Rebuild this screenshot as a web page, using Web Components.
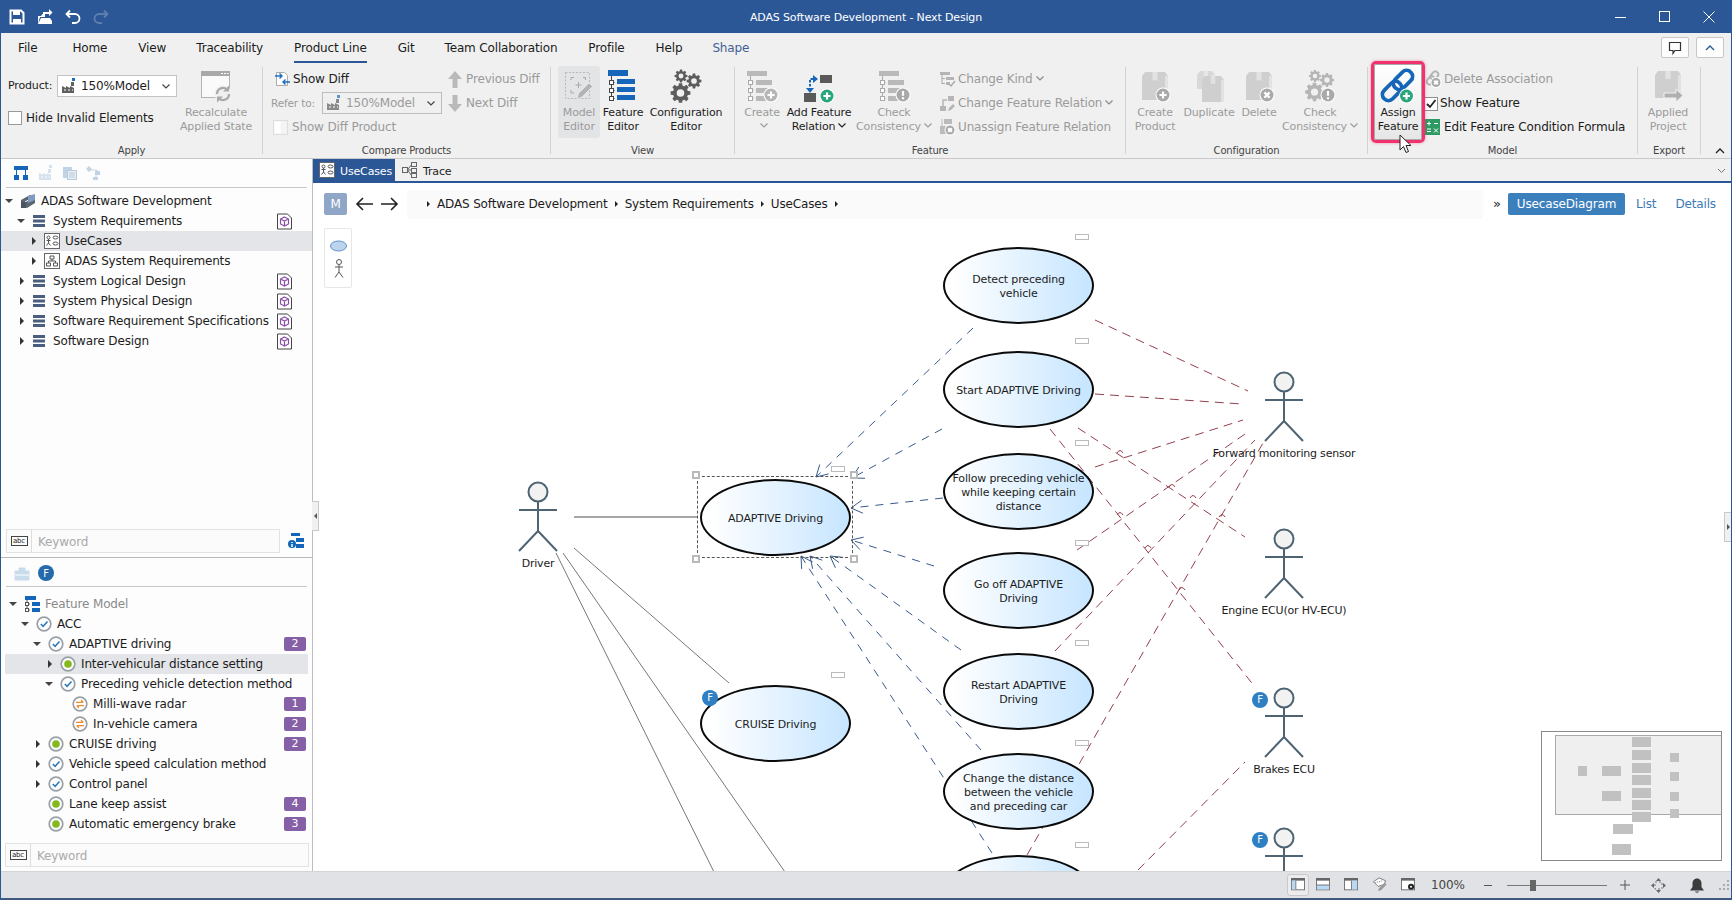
<!DOCTYPE html>
<html lang="en"><head><meta charset="utf-8"><title>ADAS Software Development - Next Design</title>
<style>
html,body{margin:0;padding:0;width:1732px;height:900px;overflow:hidden;background:#fff}
body{font:12px/14px "DejaVu Sans","Noto Sans",sans-serif;letter-spacing:-.15px;color:#1c1c1c}
</style></head><body>
<nd-app>
  <nd-titlebar text="ADAS Software Development - Next Design"></nd-titlebar>
  <nd-menubar>
    <nd-menu-item style="margin-right:4px">File</nd-menu-item><nd-menu-item>Home</nd-menu-item><nd-menu-item style="margin-right:-1px">View</nd-menu-item><nd-menu-item>Traceability</nd-menu-item>
    <nd-menu-item active>Product Line</nd-menu-item><nd-menu-item style="margin-right:-1px">Git</nd-menu-item><nd-menu-item>Team Collaboration</nd-menu-item>
    <nd-menu-item>Profile</nd-menu-item><nd-menu-item style="margin-right:-1px">Help</nd-menu-item><nd-menu-item ctx>Shape</nd-menu-item>
  </nd-menubar>
  <nd-ribbon>
    <nd-group label="Apply" w="262" pad="6">
      <nd-stack w="173" style="padding-top:8px;gap:14px">
        <nd-hbox style="height:22px"><span style="width:49px;margin-left:1px;font-size:11px">Product:</span><nd-combo text="150%Model"></nd-combo></nd-hbox>
        <nd-hbox style="height:14px;gap:4px"><nd-check></nd-check><span>Hide Invalid Elements</span></nd-hbox>
      </nd-stack>
      <nd-big w="72" icon="recalc" label="Recalculate|Applied State" off></nd-big>
    </nd-group>
    <nd-group label="Compare Products" w="288" pad="8">
      <nd-stack w="176">
        <nd-small icon="showdiff" label="Show Diff" style="margin-left:3px"></nd-small>
        <nd-hbox style="height:24px;color:#9b9b9b"><span style="width:51px;font-size:10.500px">Refer to:</span><nd-combo text="150%Model" off></nd-combo></nd-hbox>
        <nd-small icon="toggle" label="Show Diff Product" off style="margin-left:2px"></nd-small>
      </nd-stack>
      <nd-stack>
        <nd-small icon="up" label="Previous Diff" off></nd-small>
        <nd-small icon="down" label="Next Diff" off></nd-small>
      </nd-stack>
    </nd-group>
    <nd-group label="View" w="184" pad="7">
      <nd-big w="42" icon="model" label="Model|Editor" off pressed></nd-big>
      <nd-big w="40" icon="feature" label="Feature|Editor" style="margin-left:3px"></nd-big>
      <nd-big w="76" icon="gears" label="Configuration|Editor" style="margin-left:5px"></nd-big>
    </nd-group>
    <nd-group label="Feature" w="391" pad="5">
      <nd-big w="44" icon="create" label="Create|" caret off></nd-big>
      <nd-big w="64" icon="addrel" label="Add Feature|Relation" caret style="margin-left:3px"></nd-big>
      <nd-big w="78" icon="check" label="Check|Consistency" caret off style="margin-left:4px"></nd-big>
      <nd-stack style="margin-left:6px">
        <nd-small icon="kind" label="Change Kind" caret off></nd-small>
        <nd-small icon="rel" label="Change Feature Relation" caret off></nd-small>
        <nd-small icon="unassign" label="Unassign Feature Relation" off></nd-small>
      </nd-stack>
    </nd-group>
    <nd-group label="Configuration" w="242" pad="6">
      <nd-big w="46" icon="boxplus" label="Create|Product" off></nd-big>
      <nd-big w="54" icon="boxes" label="Duplicate|" off style="margin-left:4px"></nd-big>
      <nd-big w="40" icon="boxx" label="Delete|" off style="margin-left:3px"></nd-big>
      <nd-big w="78" icon="gearsx" label="Check|Consistency" caret off style="margin-left:2px"></nd-big>
    </nd-group>
    <nd-group label="Model" w="270" pad="3">
      <nd-big w="54" icon="assign" label="Assign|Feature" hl></nd-big>
      <nd-stack>
        <nd-small icon="delassoc" label="Delete Association" off></nd-small>
        <nd-small icon="checked" label="Show Feature" tight></nd-small>
        <nd-small icon="formula" label="Edit Feature Condition Formula"></nd-small>
      </nd-stack>
    </nd-group>
    <nd-group label="Export" w="63" pad="2">
      <nd-big w="56" icon="boxarrow" label="Applied|Project" off></nd-big>
    </nd-group>
    <nd-ribbon-tools></nd-ribbon-tools>
  </nd-ribbon>
  <nd-workspace>
    <nd-sidebar>
      <nd-pane slot="top">
        <nd-toolstrip icons="hier,factory,docs,nodes" style="--tp:6px"></nd-toolstrip>
        <nd-tree style="height:341px">
          <nd-row l="0" a="d" i="root" text="ADAS Software Development"></nd-row>
          <nd-row l="1" a="d" i="pkg" text="System Requirements" doc></nd-row>
          <nd-row l="2" a="r" i="uc" text="UseCases" sel></nd-row>
          <nd-row l="2" a="r" i="st" text="ADAS System Requirements"></nd-row>
          <nd-row l="1" a="r" i="pkg" text="System Logical Design" doc></nd-row>
          <nd-row l="1" a="r" i="pkg" text="System Physical Design" doc></nd-row>
          <nd-row l="1" a="r" i="pkg" text="Software Requirement Specifications" doc></nd-row>
          <nd-row l="1" a="r" i="pkg" text="Software Design" doc></nd-row>
        </nd-tree>
        <nd-search info style="padding:0 8px 0 5px"></nd-search>
      </nd-pane>
      <nd-pane slot="bottom" style="height:313px">
        <nd-toolstrip icons="chest,f"></nd-toolstrip>
        <nd-tree style="padding:7px 4px 0;height:256px;box-sizing:border-box">
          <nd-row l="0" a="d" i="fm" text="Feature Model" dim></nd-row>
          <nd-row l="1" a="d" i="ok" text="ACC"></nd-row>
          <nd-row l="2" a="d" i="ok" text="ADAPTIVE driving" badge="2" narrow></nd-row>
          <nd-row l="3" a="r" i="dot" text="Inter-vehicular distance setting" sel narrow></nd-row>
          <nd-row l="3" a="d" i="ok" text="Preceding vehicle detection method" narrow></nd-row>
          <nd-row l="4" i="swap" text="Milli-wave radar" badge="1" narrow></nd-row>
          <nd-row l="4" i="swap" text="In-vehicle camera" badge="2" narrow></nd-row>
          <nd-row l="2" a="r" i="dot" text="CRUISE driving" badge="2" narrow></nd-row>
          <nd-row l="2" a="r" i="ok" text="Vehicle speed calculation method"></nd-row>
          <nd-row l="2" a="r" i="ok" text="Control panel"></nd-row>
          <nd-row l="2" i="dot" text="Lane keep assist" badge="4" narrow></nd-row>
          <nd-row l="2" i="dot" text="Automatic emergency brake" badge="3" narrow></nd-row>
        </nd-tree>
        <nd-search style="padding:0 3px 0 4px"></nd-search>
      </nd-pane>
    </nd-sidebar>
    <nd-document>
      <nd-tabs slot="tabs"></nd-tabs>
      <nd-navbar slot="nav"></nd-navbar>
      <nd-palette slot="nav"></nd-palette>
      <nd-diagram slot="canvas">
        <nd-usecase cx="775" cy="517" selected>ADAPTIVE Driving</nd-usecase>
        <nd-usecase cx="775" cy="723" f>CRUISE Driving</nd-usecase>
        <nd-usecase cx="1018" cy="285">Detect preceding<br>vehicle</nd-usecase>
        <nd-usecase cx="1018" cy="389">Start ADAPTIVE Driving</nd-usecase>
        <nd-usecase cx="1018" cy="491">Follow preceding vehicle<br>while keeping certain<br>distance</nd-usecase>
        <nd-usecase cx="1018" cy="590">Go off ADAPTIVE<br>Driving</nd-usecase>
        <nd-usecase cx="1018" cy="691">Restart ADAPTIVE<br>Driving</nd-usecase>
        <nd-usecase cx="1018" cy="791">Change the distance<br>between the vehicle<br>and preceding car</nd-usecase>
        <nd-usecase cx="1018" cy="893"></nd-usecase>
        <nd-actor cx="538" top="482" text="Driver"></nd-actor>
        <nd-actor cx="1284" top="372" text="Forward monitoring sensor"></nd-actor>
        <nd-actor cx="1284" top="529" text="Engine ECU(or HV-ECU)"></nd-actor>
        <nd-actor cx="1284" top="688" text="Brakes ECU" f></nd-actor>
        <nd-actor cx="1284" top="828" f></nd-actor>
      </nd-diagram>
      <nd-minimap slot="canvas"></nd-minimap>
    </nd-document>
  </nd-workspace>
  <nd-statusbar></nd-statusbar>
</nd-app>
<script>
const TXT='#1c1c1c',OFF='#9b9b9b';
function gear(cx,cy,r,n,fill){
  let d='';const ri=r*.76,ro=r;
  for(let i=0;i<n;i++){const a=i/n*Math.PI*2,w=Math.PI/n*.52;
    const p=[[ri,a-w*1.35],[ro,a-w*.8],[ro,a+w*.8],[ri,a+w*1.35]];
    p.forEach((q,j)=>{d+=(i===0&&j===0?'M':'L')+(cx+q[0]*Math.cos(q[1])).toFixed(2)+' '+(cy+q[0]*Math.sin(q[1])).toFixed(2)});}
  d+='Z';const h=r*.38;
  d+=`M${cx+h} ${cy}a${h} ${h} 0 1 0 ${-2*h} 0a${h} ${h} 0 1 0 ${2*h} 0Z`;
  return `<path fill="${fill}" fill-rule="evenodd" d="${d}"/>`;
}
const treeI=(c,c2,ln)=>`<path fill="${c}" d="M1 1h20v5H1z"/><path fill="${c2}" d="M10 10h16v5H10zM10 18h14v5H10zM10 26h12v5H10z"/><path fill="none" stroke="${ln}" d="M4.500 6v23M4.500 12.500h3M4.500 20.500h3M4.500 28.500h3"/><g fill="#fff" stroke="${ln}"><rect x="2.500" y="10.500" width="4" height="4"/><rect x="2.500" y="18.500" width="4" height="4"/><rect x="2.500" y="26.500" width="4" height="4"/></g>`;
const badge=(cx,cy,r,fill,sym)=>{
  const S={plus:`M${cx-r*.55} ${cy}h${r*1.1}M${cx} ${cy-r*.55}v${r*1.1}`,x:`M${cx-r*.4} ${cy-r*.4}l${r*.8} ${r*.8}M${cx+r*.4} ${cy-r*.4}l${-r*.8} ${r*.8}`,ex:`M${cx} ${cy-r*.6}v${r*.7}M${cx} ${cy+r*.35}v${r*.3}`}[sym];
  return `<circle cx="${cx}" cy="${cy}" r="${r+1}" fill="#fff"/><circle cx="${cx}" cy="${cy}" r="${r}" fill="${fill}"/><path d="${S}" stroke="#fff" stroke-width="2.200" fill="none"/>`;
};
const box=(x,y,w,h,c='#cfcfcf',c2='#e2e2e2')=>`<path fill="${c}" d="M${x} ${y+4}l${3} -4h${w-6}l3 4v${h-4}H${x}z"/><path fill="${c2}" d="M${x+w*.4} ${y}h${w*.2}v${h*.3}h${-w*.2}z"/><path fill="${c2}" d="M${x+w-3} ${y+4}h3v${h-4}h-3z"/>`;
const BIG={
 recalc:`<rect x="1.500" y="1.500" width="28" height="26" fill="#fafafa" stroke="#b4b4b4"/><rect x="1" y="1" width="29" height="5" fill="#a9a9a9"/><path d="M21 3.500h2M24 3.500h2M27 3.500h1.500" stroke="#fff"/><circle cx="23" cy="24" r="8.500" fill="#f0f0f0"/><path d="M17 24a6 6 0 0 1 10-4.500M29 24a6 6 0 0 1-10 4.500" fill="none" stroke="#a9a9a9" stroke-width="2.200"/><path d="M29 15.500v6h-6zM17 32.500v-6h6z" fill="#a9a9a9"/>`,
 model:`<rect x="2.500" y="2.500" width="24" height="26" fill="none" stroke="#b9b9b9" stroke-dasharray="2 1.500"/><path d="M8 10V7.500h3M20 7.500h2.500V10M8 20v3h3" fill="none" stroke="#a9a9a9"/><path d="M15.500 12v6M12.500 15h6" stroke="#a9a9a9"/><path d="M14 29l1.500-5.500L26 13l3.500 3.500L19 27z" fill="#b3b3b3" stroke="#e4e4e6"/>`,
 feature:treeI('#1565b8','#1565b8','#444').replace('M1 1h20v5H1z','M1 0h20v6H1z').replace(/M10 10h16v5H10zM10 18h14v5H10zM10 26h12v5H10z/,'M10 9h18v5H10zM10 17h18v5H10zM10 25h18v5H10z'),
 gears:gear(10.500,23,10,8,'#5d5d5d')+gear(11,6,6.500,8,'#5d5d5d')+gear(24,11,7.500,8,'#5d5d5d'),
 create:treeI('#b9b9b9','#b9b9b9','#aaa')+badge(25,25,6.500,'#b5b5b5','plus'),
 addrel:`<path fill="#5a5a5a" d="M17 5h12v8H17zM1 23h12v9H1z"/><path d="M14 9H7v11" fill="none" stroke="#1565b8" stroke-width="2" stroke-dasharray="2.500 1.500"/><path d="M10 5l5 4-5 4zM3 18h8l-4 5z" fill="#1565b8"/>`+badge(24,26,6.500,'#2ba57c','plus'),
 check:treeI('#b9b9b9','#b9b9b9','#aaa')+badge(25,25,6.500,'#a9a9a9','ex'),
 boxplus:box(3,2,26,28)+badge(24,25,6.500,'#a9a9a9','plus'),
 boxes:box(4,1,18,18,'#d8d8d8','#e8e8e8')+box(9,6,22,26),
 boxx:box(3,2,26,28)+badge(24,25,6.500,'#a9a9a9','x'),
 gearsx:gear(10.500,22,9.500,8,'#b5b5b5')+gear(11,6,6,8,'#b5b5b5')+gear(23,10,7,8,'#b5b5b5')+badge(24,25,6.500,'#a9a9a9','ex'),
 assign:`<g fill="none" stroke="#1565b8" stroke-width="3.800"><rect x="-11" y="-6" width="22" height="12" rx="6" transform="translate(21 10) rotate(-45)"/><rect x="-11" y="-6" width="22" height="12" rx="6" transform="translate(10 21) rotate(-45)"/></g>`+badge(24.500,26,6.500,'#2ba57c','plus'),
 boxarrow:box(3,1,26,27)+`<path d="M12 23h12v-4l7 6.500L24 32v-4H12z" fill="#b0b0b0" stroke="#f0f0f0"/>`
};
const SM={
 showdiff:`<path d="M2.500 1.500h8l3 3v10h-11z" fill="#fff" stroke="#aaa"/><path d="M1 5h7M5.500 2.500L8 5 5.500 7.500" fill="none" stroke="#1b6fc2" stroke-width="1.400"/><path d="M16 11H9M11.500 8.500L9 11l2.500 2.500" fill="none" stroke="#1b6fc2" stroke-width="1.400"/>`,
 toggle:`<rect x=".5" y="1.500" width="14" height="14" fill="#f4f4f4" stroke="#ddd"/><rect x="1.500" y="2.500" width="6" height="12" fill="#fff"/>`,
 up:`<path fill="#b9b9b9" d="M8 0l7 8h-4.500v9h-5V8H1z"/>`,
 down:`<path fill="#b9b9b9" d="M8 17l7-8h-4.500V0h-5v9H1z"/>`,
 kind:`<path fill="#b5b5b5" d="M1 1h10v3H1zM7 6h8v3H7zM7 11h4v3H7z"/><path d="M3 4v9M3 7.500h3M3 12.500h3" stroke="#aaa" fill="none"/><path d="M10 13l2 2 4-5" stroke="#aaa" stroke-width="1.500" fill="none"/>`,
 rel:`<path fill="#b5b5b5" d="M9 1h6v5H9zM1 11h6v5H1z"/><path d="M4 11V5h4" stroke="#b5b5b5" stroke-width="1.500" fill="none"/><path d="M9 16l1-3 4-4 2 2-4 4z" fill="#b5b5b5"/>`,
 unassign:`<path fill="#bbb" d="M5 0h8v5H5zM1 7h8v8H1z"/><path d="M3 0v7" stroke="#bbb"/>`+badge(11,11,4.500,'#a9a9a9','x'),
 delassoc:`<g fill="none" stroke="#b5b5b5" stroke-width="2"><rect x="-5" y="-3" width="9" height="6" rx="3" transform="translate(6 9) rotate(-50)"/><rect x="-4" y="-3" width="9" height="6" rx="3" transform="translate(9 5) rotate(-50)"/></g>`+badge(11,11.500,4.500,'#a9a9a9','x'),
 checked:`<rect x=".5" y="1.500" width="13" height="13" fill="#fff" stroke="#8f8f8f"/><path d="M3 8l3 3 5.500-7" fill="none" stroke="#222" stroke-width="1.800"/>`,
 formula:`<rect x="0" y="0" width="15" height="16" fill="#2e9a63"/><path d="M2 4.500h4M4 2.500v4M9 4.500h4M2 10h4M2 12.500h4M9 9.500l4 4M13 9.500l-4 4" stroke="#fff" fill="none"/>`,
 factory:`<path fill="#606060" d="M1 15V8l4 2V8l4 2V8l4 2V15zM10 4h3v4h-3z" /><rect x="11" y="0" width="3" height="3" fill="#1b6fc2"/><path d="M3 12h2M7 12h2M11 12h1" stroke="#fff"/>`,
 factoryoff:`<path fill="#8a8a8a" d="M1 15V8l4 2V8l4 2V8l4 2V15zM10 4h3v4h-3z" /><rect x="11" y="0" width="3" height="3" fill="#5d95cb"/><path d="M3 12h2M7 12h2M11 12h1" stroke="#fff"/>`
};
const TREE={
 root:`<path d="M1 7l9-5 5 2v6l-8 5-6-2z" fill="#5b6672"/><path d="M5 9l9-5" stroke="#fff"/><rect x="1" y="9" width="5" height="6" fill="#4a5561"/><path d="M8 3l7-2v6l-7 3z" fill="#7f9cc0"/>`,
 pkg:`<path fill="#4a5f7f" d="M1 2h12v3H1zM1 6.500h12v3H1zM1 11h12v3H1z"/>`,
 uc:`<rect x=".5" y=".5" width="15" height="15" fill="#fff" stroke="#666"/><circle cx="4.500" cy="4.500" r="1.500" fill="none" stroke="#555"/><path d="M4.500 6v4M2.500 7.500h4M2.500 12.500l2-2.500 2 2.500" stroke="#555" fill="none"/><ellipse cx="11.500" cy="4.500" rx="2.500" ry="1.500" fill="none" stroke="#555"/><ellipse cx="11.500" cy="10.500" rx="2.500" ry="1.500" fill="none" stroke="#555"/>`,
 st:`<rect x=".5" y=".5" width="15" height="15" fill="#fff" stroke="#666"/><path d="M6 3h4v3H6zM2.500 10h4v3h-4zM9.500 10h4v3h-4zM8 6v2M4.500 10V8h7v2" fill="none" stroke="#555"/>`,
 fm:`<path fill="#1565b8" d="M1 0h11v4H1zM8 6h8v4H8zM8 12h8v4H8z"/><path d="M3 4v10M3 8h3M3 14h3" stroke="#555" fill="none"/><g fill="#fff" stroke="#555"><rect x="1.500" y="6.500" width="3" height="3"/><rect x="1.500" y="12.500" width="3" height="3"/></g>`,
 ok:`<circle cx="8" cy="8" r="6.800" fill="#fff" stroke="#9aa1a9" stroke-width="1.700"/><path d="M4.800 8l2.300 2.300L11.500 5.500" fill="none" stroke="#2a78b8" stroke-width="1.500"/>`,
 dot:`<circle cx="8" cy="8" r="6.800" fill="#fff" stroke="#9aa1a9" stroke-width="1.700"/><circle cx="8" cy="8" r="3.800" fill="#85b81d"/>`,
 swap:`<circle cx="8" cy="8" r="6.800" fill="#fff" stroke="#9aa1a9" stroke-width="1.700"/><path d="M4 6.300h7M9 4.300l2.300 2M12 9.700H5M7 11.700l-2.300-2" fill="none" stroke="#ec8b2c" stroke-width="1.300"/>`
};
const svg=(w,h,vb,inner,extra='')=>`<svg width="${w}" height="${h}" viewBox="0 0 ${vb} ${vb}" style="display:block;overflow:visible;${extra}">${inner}</svg>`;
const chev=(c='#333')=>`<svg width="8" height="5" viewBox="0 0 8 5" style="display:inline-block;vertical-align:2px;margin-left:3px"><path d="M.5 .5L4 4 7.500 .5" fill="none" stroke="${c}" stroke-width="1.200"/></svg>`;
function def(name,css,render){customElements.define(name,class extends HTMLElement{connectedCallback(){if(this.shadowRoot)return;const s=this.attachShadow({mode:'open'});s.innerHTML=`<style>${css}</style>`+render(this)}})}
const has=(e,a)=>e.hasAttribute(a);

def('nd-app',`:host{display:flex;flex-direction:column;width:1732px;height:900px;box-sizing:border-box;border:solid #2b5797;border-width:0 1px;position:relative;overflow:hidden;background:#f0f0f0}`,()=>`<slot></slot>`);

def('nd-titlebar',`:host{display:flex;align-items:center;height:33px;margin:0 -1px;background:#2b5797;color:#fff;position:relative;flex:none}
.l{display:flex;gap:12px;padding-left:9px}.c{position:absolute;left:0;right:0;text-align:center;top:11px;font-size:11px}
.r{margin-left:auto;display:flex;gap:0;padding-right:17px}.r svg{margin-left:32px}`,e=>`<div class="l">
${svg(16,16,16,`<path d="M1.500 1.500h10.500l2.500 2.500v10.500h-13z" fill="none" stroke="#fff" stroke-width="2"/><path d="M4 2h7v4H4zM4 10h8v4.500H4z" fill="#fff"/>`)}
${svg(16,16,16,`<path d="M1 15V7h3L5.500 5H8v3H3l-2 7zM1 15h14v-3l-2-3H4z" fill="#fff"/><path d="M6 3h6V0l3.500 3.500L12 7V5H6z" fill="#fff"/>`)}
${svg(16,16,16,`<path d="M5 1.500L1.500 5 5 8.500M2 5h8a4.500 4.500 0 0 1 0 9H7" fill="none" stroke="#fff" stroke-width="1.800"/>`)}
${svg(16,16,16,`<path d="M11 1.500L14.500 5 11 8.500M14 5H6a4.500 4.500 0 0 0 0 9h3" fill="none" stroke="#5d7fae" stroke-width="1.800"/>`)}
</div><div class="c">${e.getAttribute('text')}</div><div class="r">
${svg(12,12,12,`<path d="M0 6.500h11" stroke="#fff"/>`)}
${svg(12,12,12,`<rect x=".5" y=".5" width="10" height="10" fill="none" stroke="#fff"/>`)}
${svg(12,12,12,`<path d="M.5 .5l11 11M11.500 .5l-11 11" stroke="#fff"/>`)}</div>`);

def('nd-menubar',`:host{display:flex;height:30px;padding-left:17px;gap:31px;flex:none;position:relative;background:#f0f0f0}`,()=>`<slot></slot>`);
def('nd-menu-item',`:host{display:block;height:28px;line-height:31px;box-sizing:content-box;white-space:nowrap}
:host([active]){border-bottom:2px solid #2b5797}:host([ctx]){color:#3f5f94}`,()=>`<slot></slot>`);

def('nd-ribbon',`:host{display:flex;height:96px;box-sizing:border-box;border-bottom:1px solid #c9c9c9;padding-top:4px;flex:none;background:#f0f0f0;position:relative}`,()=>`<slot></slot>`);
def('nd-group',`:host{display:block;box-sizing:border-box;height:87px;border-right:1px solid #d2d2d2;flex:none}
.c{display:flex;align-items:flex-start;height:72px}.t{height:14px;line-height:14px;margin-top:5px;text-align:center;color:#444;font-size:10px}`,
 e=>`<style>:host{width:${e.getAttribute('w')}px}.c{padding-left:${e.getAttribute('pad')}px}</style><div class="c"><slot></slot></div><div class="t">${e.getAttribute('label')}</div>`);
def('nd-stack',`:host{display:flex;flex-direction:column;flex:none}`,e=>`${e.getAttribute('w')?`<style>:host{width:${e.getAttribute('w')}px}</style>`:''}<slot></slot>`);
def('nd-hbox',`:host{display:flex;align-items:center;flex:none;white-space:nowrap}`,()=>`<slot></slot>`);
def('nd-check',`:host{display:block;width:14px;height:14px;box-sizing:border-box;background:#fff;border:1px solid #9a9a9a;flex:none;margin-left:1px}`,()=>``);
def('nd-combo',`:host{display:flex;align-items:center;box-sizing:border-box;width:120px;height:22px;background:#fff;border:1px solid #c4c4c4;padding:0 6px 0 3px;gap:4px;flex:none}
:host([off]){background:#f0f0f0;color:#9b9b9b;border-color:#bdbdbd}.t{flex:1}`,
 e=>`${svg(16,16,16,SM[has(e,'off')?'factoryoff':'factory'])}<span class="t">${e.getAttribute('text')}</span>${chev('#444')}`);
def('nd-big',`:host{display:block;box-sizing:border-box;height:72px;padding-top:3px;text-align:center;flex:none;position:relative;white-space:nowrap;font-size:11px}
:host([off]){color:${OFF}}:host([pressed]){background:#e3e4e6;border-radius:3px;margin-top:-1px;padding-top:4px}
.i{display:flex;justify-content:center;height:32px}.t{margin-top:4px;line-height:14px;height:28px}.t div{height:14px;margin:0 -6px}
:host([hl]){height:82px;margin-top:-6px;padding-top:0;border:3px solid #f0326d;border-radius:5px;box-shadow:0 0 3px rgba(240,50,109,.5)}
.in{display:block}
:host([hl]) .in{height:76px;border:1px solid #a9a9a9;border-radius:2px;padding-top:5px;box-sizing:border-box;background:linear-gradient(#fff,#f1f1f1 60%,#e6e6e6)}
.cur{position:absolute;left:25px;top:70px}`,
 e=>{const[a,b]=e.getAttribute('label').split('|');const car=has(e,'caret')?chev(has(e,'off')?'#9b9b9b':'#222'):'';
 return `<style>:host{width:${e.getAttribute('w')}px}</style><div class="in"><div class="i">${svg(32,32,32,BIG[e.getAttribute('icon')])}</div><div class="t"><div>${a}</div><div>${b}${car}</div></div></div>`+
 (has(e,'hl')?`<svg class="cur" width="13" height="20" viewBox="0 0 13 20"><path d="M1 1v15l3.500-3.500 2.500 6 2.500-1-2.500-6h5z" fill="#fff" stroke="#222"/></svg>`:'')});
def('nd-small',`:host{display:flex;align-items:center;height:24px;gap:3px;white-space:nowrap;flex:none}:host([off]){color:${OFF}}`,
 e=>`${svg(has(e,'tight')?14:16,16,has(e,'tight')?14:16,SM[e.getAttribute('icon')],has(e,'tight')?'margin:0 -1px':'')}<span>${e.getAttribute('label')}${has(e,'caret')?chev('#8a8a8a'):''}</span>`);
def('nd-ribbon-tools',`:host{display:block;flex:1;position:relative}
.b{position:absolute;top:-30px;height:21px;box-sizing:border-box;background:#fdfdfd;border:1px solid #c8c8c8;border-radius:2px;display:flex;align-items:center;justify-content:center}
.a{left:-40px;width:28px}.b2{left:-5px;width:28px}.u{position:absolute;left:14px;top:81px}`,
 ()=>`<div class="b a">${svg(14,14,14,`<path d="M1.500 1.500h11v8H7L5 12.500V9.500H1.500z" fill="none" stroke="#333" stroke-width="1.200"/>`)}</div>
 <div class="b b2"><svg width="10" height="6" viewBox="0 0 10 6"><path d="M1 5l4-4 4 4" fill="none" stroke="#2b5797" stroke-width="1.300"/></svg></div>
 <svg class="u" width="10" height="6" viewBox="0 0 10 6"><path d="M1 5l4-4 4 4" fill="none" stroke="#222" stroke-width="1.300"/></svg>`);

def('nd-workspace',`:host{display:flex;flex:1;min-height:0;background:#fff}`,()=>`<slot></slot>`);
def('nd-sidebar',`:host{display:flex;flex-direction:column;width:311px;flex:none;background:#fdfdfd;border-right:1px solid #bdbdbd;position:relative}
.g{position:absolute;left:311px;top:342px;width:7px;height:30px;box-sizing:border-box;background:#f0f0f0;border:1px solid #c9c9c9;border-left:0;z-index:3;display:flex;align-items:center;justify-content:center}
.g i{border:solid transparent;border-width:3px 3px 3px 0;border-right-color:#555;display:block}`,
 ()=>`<slot name="top"></slot><slot name="bottom"></slot><div class="g"><i></i></div>`);
def('nd-pane',`:host{display:flex;flex-direction:column;flex:none;box-sizing:border-box}:host([slot=top]){border-bottom:1px solid #b8b8b8;height:399px}`,()=>`<slot></slot>`);
def('nd-toolstrip',`:host{display:block;height:28px;margin:0 5px;border-bottom:1px solid #c9c9c9;box-sizing:content-box;flex:none}
.w{display:flex;gap:8px;padding:var(--tp,7px) 0 0 8px;align-items:center;height:16px}`,
 e=>{const I={hier:`<path fill="#1565b8" d="M0 1h14v4H0zM0 10h5v5H0zM9 10h5v5H9z"/><path d="M2.500 5v5M11.500 5v5" stroke="#1565b8"/>`,
  factory:`<g opacity=".45">${SM.factoryoff.replace(/#8a8a8a/g,'#a9c3dd').replace(/#5d95cb/g,'#a9c3dd')}</g>`,
  docs:`<path d="M1 2h9v3H5v8H1z" fill="#c2d3e3"/><rect x="5.500" y="5.500" width="9" height="9" fill="#e8eef4" stroke="#b8cbdd"/><path d="M7 8h6M7 10h6M7 12h6" stroke="#b8cbdd"/>`,
  nodes:`<path fill="#c2d3e3" d="M0 4l3-3 3 3-3 3zM9 6h5v4H9zM7 12h5v3H7z"/><path d="M5 5h6v2M10 10v3" stroke="#c2d3e3" fill="none"/>`,
  chest:`<path d="M1 6h14v9H1zM5 6V3h6v3" fill="#c9dcec" stroke="#c9dcec"/><path d="M1 10h14" stroke="#fff"/>`,
  f:`<circle cx="8" cy="8" r="8" fill="#256bab"/><text x="8" y="11.500" text-anchor="middle" fill="#fff" font-size="10">F</text>`};
  return `<div class="w">${e.getAttribute('icons').split(',').map(n=>svg(16,16,16,I[n])).join('')}</div>`});
def('nd-tree',`:host{display:block;flex:none;padding-top:3px;box-sizing:border-box}`,()=>`<slot></slot>`);
def('nd-row',`:host{display:flex;align-items:center;height:20px;box-sizing:border-box;padding-right:20px;white-space:nowrap;flex:none}
:host([sel]){background:#e4e5e8}:host([narrow]){padding-right:2px}:host([dim]) .t{color:#8a8a8a}
.a{width:14px;height:10px;flex:none;display:flex;align-items:center}.a i{display:block;border-style:solid;border-color:transparent}
.a.d i{border-width:4px 4px 0;border-top-color:#444;margin-left:0}.a.r i{border-width:4px 0 4px 4px;border-left-color:#333;margin-left:3px}
.ic{width:18px;height:16px;display:flex;justify-content:center;flex:none;margin-right:4px}.t{flex:1}
.b{width:22px;height:14px;line-height:14px;background:#8660a6;color:#fff;text-align:center;border-radius:2px;font-size:11px}`,
 e=>{const l=+e.getAttribute('l'),a=e.getAttribute('a');
 const doc=has(e,'doc')?svg(15,16,15,`<path d="M.5 .5h10l4 4v11H.5z" fill="#fff" stroke="#444"/><path d="M7.500 3.500l4 2v5l-4 2-4-2v-5zM3.500 5.500l4 2 4-2M7.500 7.500v5" fill="none" stroke="#8a4fa8" stroke-width="1.200"/>`):'';
 const bd=e.getAttribute('badge')?`<div class="b">${e.getAttribute('badge')}</div>`:'';
 return `<style>:host{padding-left:${4+12*l}px}</style><div class="a ${a||''}"><i></i></div><div class="ic">${svg(16,16,16,TREE[e.getAttribute('i')])}</div><div class="t">${e.getAttribute('text')}</div>${doc}${bd}`});
def('nd-search',`:host{display:flex;align-items:center;height:24px;flex:none;gap:8px}
.f{flex:1;height:24px;box-sizing:border-box;border:1px solid #e2e2e2;background:#fbfbfb;display:flex;align-items:center;color:#aaa;line-height:16px}
.l{width:24px;height:22px;border-right:1px solid #ddd;margin-right:6px;display:flex;align-items:center;justify-content:center}
.k{padding-top:2px}
.ab{border:1px solid #444;font-size:7px;line-height:8px;height:8px;width:15px;color:#222;text-align:center;box-sizing:content-box}`,
 e=>`<div class="f"><div class="l"><div class="ab">abc</div></div><span class="k">Keyword</span></div>${has(e,'info')?svg(16,16,16,`<path fill="#1565b8" d="M3 0h9v3H3zM8 5h8v4H8zM8 11h8v4H8z"/><circle cx="4" cy="11" r="4" fill="#1565b8"/><path d="M4 9v1M4 11v3" stroke="#fff" stroke-width="1.500"/>`):''}`);

def('nd-document',`:host{display:flex;flex-direction:column;flex:1;min-width:0;position:relative}
.c{flex:1;position:relative;overflow:hidden;background:#fff}.top{position:relative;z-index:2;pointer-events:none}
.g{position:absolute;right:0;top:353px;width:7px;height:30px;box-sizing:border-box;background:#f0f0f0;border:1px solid #c9c9c9;border-right:0;z-index:3;display:flex;align-items:center;justify-content:center}
.g i{border:solid transparent;border-width:3px 0 3px 3px;border-left-color:#555;display:block}`,
 ()=>`<slot name="tabs"></slot><div class="c"><slot name="canvas"></slot><div class="top"><slot name="nav"></slot></div></div><div class="g"><i></i></div>`);
def('nd-tabs',`:host{display:flex;height:24px;box-sizing:border-box;border-bottom:2px solid #2b5797;background:#f0f0f0;flex:none;position:relative;font-size:11px}
.t{display:flex;align-items:center;gap:5px;height:22px;white-space:nowrap}.t span{padding-top:3px}.a{background:#2b5797;color:#fff;width:82px;box-sizing:border-box;padding-left:6px;gap:5px}
.x{padding-left:7px}.ch{position:absolute;right:5px;top:9px}`,
 ()=>`<div class="t a">${svg(16,16,16,`<rect width="16" height="16" fill="#fff"/>`+TREE.uc)}<span>UseCases</span></div><div class="t x">${svg(16,16,16,`<g fill="none" stroke="#666"><rect x=".5" y="5.500" width="5" height="5"/><rect x="9.500" y=".5" width="5" height="4"/><rect x="9.500" y="6.500" width="5" height="4"/><rect x="9.500" y="11.500" width="5" height="4"/><path d="M5.500 8l4-5.500M5.500 8h4M5.500 8l4 5.500"/></g>`)}<span>Trace</span></div>
 <svg class="ch" width="9" height="6" viewBox="0 0 9 6"><path d="M1 1l3.500 3.500L8 1" fill="none" stroke="#777"/></svg>`);
def('nd-navbar',`:host{display:flex;align-items:center;height:42px;box-sizing:border-box;padding:0 0 0 11px;position:relative;flex:none}
.m{width:23px;height:22px;background:#8fa6c7;color:#fff;text-align:center;line-height:22px;border-radius:2px}
.bc{margin-left:8px;width:1076px;height:29px;background:#fafafa;border-radius:3px;display:flex;align-items:center;padding-left:20px;box-sizing:border-box;gap:7px}
.bc i{display:block;border:solid transparent;border-width:3.500px 0 3.500px 3.500px;border-left-color:#222}
.ch{margin-left:10px;font-size:13px;width:12px}.btn{margin-left:3px;width:117px;height:22px;background:#3c7fbd;color:#fff;text-align:center;line-height:22px;border-radius:2px}
.ln{color:#3c7ab5;margin-left:11px}`,
 ()=>`<div class="m">M</div>
 ${svg(18,18,18,`<path d="M18 9H2M8 3L2 9l6 6" fill="none" stroke="#222" stroke-width="1.600"/>`,'margin-left:8px')}
 ${svg(18,18,18,`<path d="M0 9h16M10 3l6 6-6 6" fill="none" stroke="#222" stroke-width="1.600"/>`,'margin-left:8px')}
 <div class="bc"><i></i><span>ADAS Software Development</span><i></i><span>System Requirements</span><i></i><span>UseCases</span><i></i></div>
 <div class="ch">»</div><div class="btn">UsecaseDiagram</div><div class="ln">List</div><div class="ln" style="margin-left:19px">Details</div>`);
def('nd-palette',`:host{display:block;width:28px;height:60px;margin:3px 0 0 11px;box-sizing:border-box;border:1px solid #e6e6e6;border-radius:2px;background:#fff;padding:9px 0 0 5px}`,
 ()=>`<svg width="18" height="44" viewBox="0 0 18 44" style="display:block"><ellipse cx="8.500" cy="8" rx="8" ry="5" fill="#bcd5ec" stroke="#5d8fcf"/><circle cx="9" cy="24" r="2.500" fill="none" stroke="#555"/><path d="M9 26.500V34M5 29h8M5 39.500L9 34l4 5.500" fill="none" stroke="#555"/></svg>`);

const OX=313,OY=183;
const BL='#37598c',RD='#94404c';
const blue=[[973,328,816,477],[942,429,852,478],[943,498,851,508],[934,566,851,540],[961,650,830,556],[981,750,810,556],[992,853,801,556]];
const red=[[1095,320,1248,391],[1095,394,1242,404],[1095,467,1243,420],[1077,550,1248,432],[1055,651,1255,440],[1027,855,1263,443],[1138,870,1245,762],[1078,428,1245,537],[1050,429,1255,687]];
const gray=[[574,548,729,683],[563,553,785,872],[556,553,714,872]];
const jumps=[[1120,453],[1172,487],[1193,498],[1222,517],[1120,515],[1148,548],[1182,590]];
function lines(){
 let s=`<path d="M574 517H697" stroke="#a6a6a6" stroke-width="2"/>`;
 gray.forEach(l=>s+=`<path d="M${l[0]} ${l[1]}L${l[2]} ${l[3]}" stroke="#777"/>`);
 blue.forEach(l=>{const a=Math.atan2(l[1]-l[3],l[0]-l[2]),L=13,w=.52;
  s+=`<path d="M${l[0]} ${l[1]}L${l[2]} ${l[3]}" stroke="${BL}" stroke-dasharray="8 7"/>`;
  s+=`<path d="M${l[2]+L*Math.cos(a+w)} ${l[3]+L*Math.sin(a+w)}L${l[2]} ${l[3]}L${l[2]+L*Math.cos(a-w)} ${l[3]+L*Math.sin(a-w)}" fill="none" stroke="${BL}"/>`});
 red.forEach(l=>s+=`<path d="M${l[0]} ${l[1]}L${l[2]} ${l[3]}" stroke="${RD}" stroke-dasharray="9 6"/>`);
 jumps.forEach(j=>s+=`<path d="M${j[0]-3} ${j[1]}q3 -5 6 0" fill="none" stroke="${RD}"/>`);
 [[1075,234],[1075,338],[1075,440],[1075,540],[1075,640],[1075,740],[1075,842],[831,466],[831,672]].forEach(r=>s+=`<rect x="${r[0]+.5}" y="${r[1]+.5}" width="13" height="5" fill="#fff" stroke="#bbb"/>`);
 return s;
}
def('nd-diagram',`:host{position:absolute;left:0;top:0;width:1418px;height:688px;overflow:hidden;display:block}svg{position:absolute;left:0;top:0}`,
 ()=>`<svg width="1418" height="688" viewBox="${OX} ${OY} 1418 688" fill="none">${lines()}</svg><slot></slot>`);
def('nd-usecase',`:host{position:absolute;width:151px;height:77px;box-sizing:border-box;border:2px solid #0a0a0a;border-radius:50%;background:linear-gradient(90deg,#fff 5%,#c8e6ff 97%);display:flex;align-items:center;justify-content:center;text-align:center;line-height:14px;white-space:nowrap;font-size:11px}
span{padding-top:3px}
.sel{position:absolute;left:-5px;right:-4px;top:-5px;bottom:-4px;border:1px dashed #555}
.h{position:absolute;width:4px;height:4px;background:#fff;border:2px solid #b9b9b9}
.f{position:absolute;left:0;top:3px;width:16px;height:16px;border-radius:50%;background:#2f80c3;color:#fff;text-align:center;line-height:16px;font-size:10px}`,
 e=>`<style>:host{left:${+e.getAttribute('cx')-75-OX}px;top:${+e.getAttribute('cy')-38-OY}px}</style><span><slot></slot></span>`+
 (has(e,'selected')?`<div class="sel"></div><div class="h" style="left:-10px;top:-10px"></div><div class="h" style="right:-9px;top:-10px"></div><div class="h" style="left:-10px;bottom:-9px"></div><div class="h" style="right:-9px;bottom:-9px"></div>`:'')+
 (has(e,'f')?`<div class="f">F</div>`:''));
def('nd-actor',`:host{position:absolute;width:200px;display:block;text-align:center;white-space:nowrap}
svg{display:block;margin:0 auto}.t{margin-top:3px;font-size:11px;letter-spacing:-.2px}
.f{position:absolute;left:68px;top:4px;width:16px;height:16px;border-radius:50%;background:#2f80c3;color:#fff;text-align:center;line-height:16px;font-size:10px}`,
 e=>`<style>:host{left:${+e.getAttribute('cx')-100-OX}px;top:${+e.getAttribute('top')-OY}px}</style>
 <svg width="42" height="72" viewBox="0 0 42 72" style="overflow:visible"><g stroke="#4f6472" stroke-width="2" fill="none"><circle cx="21" cy="10" r="9.500" fill="#f2f2f2"/><path d="M21 19.500V40M2 28h38M2 69L21 49 40 69M21 40v9"/></g></svg>
 <div class="t">${e.getAttribute('text')||''}</div>${has(e,'f')?`<div class="f">F</div>`:''}`);
def('nd-minimap',`:host{position:absolute;left:1228px;top:548px;width:181px;height:130px;box-sizing:border-box;border:1px solid #8a8a8a;background:#fff;display:block;overflow:hidden;z-index:1}
svg{display:block}`,
 ()=>{const R=[[1632,737],[1632,750],[1632,763],[1632,775],[1632,788],[1632,800],[1632,812]].map(a=>[a[0],a[1],19,10]).concat([[1670,753,9,9],[1670,772,9,9],[1670,792,9,9],[1670,809,9,9],[1578,766,9,10],[1602,766,19,10],[1602,791,19,10],[1613,824,20,10],[1612,844,19,11]]);
 return `<svg width="179" height="128" viewBox="1542 732 179 128"><rect x="1555.500" y="735.500" width="170" height="79" fill="#efefef" stroke="#a9a9a9"/>${R.map(r=>`<rect x="${r[0]}" y="${r[1]}" width="${r[2]}" height="${r[3]}" fill="#c1c1c1"/>`).join('')}</svg>`});

def('nd-statusbar',`:host{display:flex;height:29px;box-sizing:border-box;background:#e1e2e5;border-top:1px solid #d4d4d4;border-bottom:2px solid #405a80;margin:0 -1px;flex:none;position:relative;align-items:center;color:#444}
.w{margin-left:1287px;display:flex;align-items:center;height:22px}
.a{width:22px;height:22px;box-sizing:border-box;border:1px solid #c9c9c9;border-radius:3px;background:#ececee;display:flex;align-items:center;justify-content:center}
.p{width:100px;height:1px;background:#777;position:relative;margin:0 13px 0 15px}.p i{position:absolute;left:23px;top:-5px;width:6px;height:11px;background:#666}`,
 ()=>{const lay=(inner)=>svg(16,14,16,`<rect x=".5" y=".5" width="15" height="13" fill="#fff" stroke="#666"/><path d="M0 0h16v3H0z" fill="#666"/>${inner}`);
 return `<div class="w"><div class="a">${lay(`<path fill="#b8d8f5" d="M1 3h4v10H1z"/><path d="M5.500 3v10" stroke="#666"/>`)}</div>
 <div style="margin-left:6px">${lay(`<path fill="#b8d8f5" d="M1 8h14v5H1z"/><path d="M1 8h14" stroke="#666"/>`)}</div>
 <div style="margin-left:12px">${lay(`<path fill="#b8d8f5" d="M9 3h6v10H9z"/><path d="M8.500 3v10" stroke="#666"/>`)}</div>
 <div style="margin-left:13px">${svg(17,16,17,`<path d="M1 5l6-4 7 3-2 4-6 2z" fill="#fff" stroke="#777"/><path d="M3 6l8-2" stroke="#777" stroke-dasharray="1 1"/><path d="M6 15l1-3 6-6 2 2-6 6z" fill="#999"/>`)}</div>
 <div style="margin-left:11px">${svg(16,14,16,`<rect x=".5" y=".5" width="15" height="13" fill="#fff" stroke="#666"/><path d="M0 0h16v3H0z" fill="#666"/><circle cx="11.500" cy="10" r="3.500" fill="#222"/><circle cx="11.500" cy="10" r="1.200" fill="#fff"/>`)}</div>
 <div style="margin-left:15px;width:34px;font-size:12px;white-space:nowrap">100%</div>
 <div style="margin-left:19px;width:8px;height:1px;background:#555"></div>
 <div class="p"><i></i></div>
 ${svg(10,10,10,`<path d="M0 5h10M5 0v10" stroke="#555"/>`)}
 <div style="margin-left:21px">${svg(15,15,15,`<path d="M7.500 0l2.500 3H5zM7.500 15L5 12h5zM0 7.500L3 5v5zM15 7.500L12 5v5z" fill="#666"/><rect x="4" y="6" width="7" height="3" fill="#e1e2e5"/><path d="M4 4h7v7H4z" fill="none" stroke="#777" stroke-dasharray="2 2"/>`)}</div>
 <div style="margin-left:24px">${svg(14,15,14,`<path d="M7 0c3 0 4.500 2.500 4.500 5v3.500L14 12H0l2.500-3.500V5C2.500 2.500 4 0 7 0zM5 13h4c0 1.500-4 1.500-4 0z" fill="#3c3c3c"/>`)}</div>
 <div style="margin-left:15px">${svg(10,10,10,`<path d="M8 0h2v2H8zM4 4h2v2H4zM8 4h2v2H8zM0 8h2v2H0zM4 8h2v2H4zM8 8h2v2H8z" fill="#aaa"/>`)}</div></div>`});
</script>
</body></html>
